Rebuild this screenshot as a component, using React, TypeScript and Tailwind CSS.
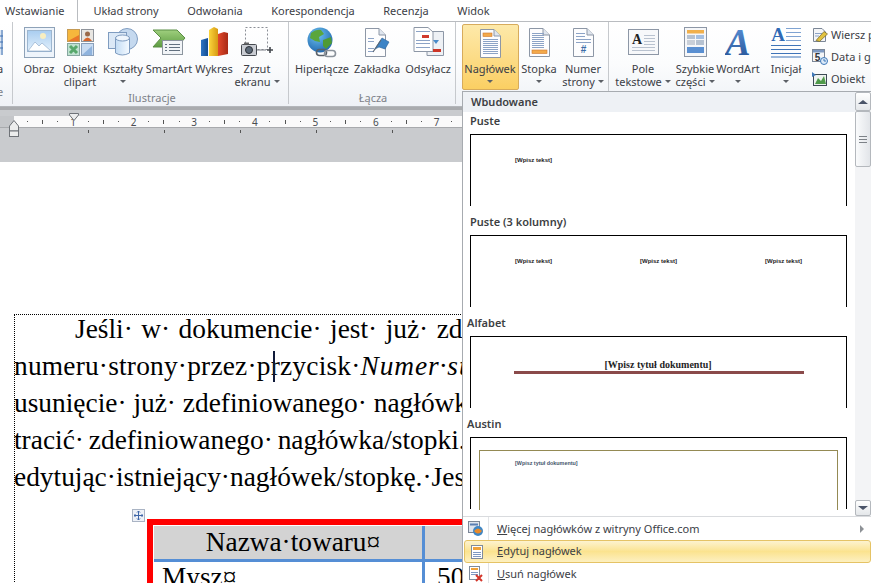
import React from "react";

const Arrow = () => (
  <span className="inline-block w-0 h-0 border-l-[3px] border-r-[3px] border-t-[3px] border-l-transparent border-r-transparent border-t-[#5c6066]" />
);

const Doc = ({ children, x = 0 }: { children?: React.ReactNode; x?: number }) => (
  <>
    <path d={`M${x + 1.5} 1.5H${x + 15}L${x + 21.5} 8V29.5H${x + 1.5}Z`} fill="#fdfdfe" stroke="#8d97a6" />
    <path d={`M${x + 15} 1.5V8H${x + 21.5}`} fill="#dfe5ee" stroke="#8d97a6" />
    {children}
  </>
);

const Lines = ({ ys, x1 = 4, x2 = 19 }: { ys: number[]; x1?: number; x2?: number }) => (
  <>
    {ys.map((y) => (
      <path key={y} d={`M${x1} ${y + 0.5}H${x2}`} stroke="#8ca3c6" />
    ))}
  </>
);

const Icons: Record<string, React.ReactNode> = {
  obraz: (
    <svg width="31" height="31" viewBox="0 0 31 31">
      <defs>
        <linearGradient id="sky" x1="0" y1="0" x2="0" y2="1">
          <stop offset="0" stopColor="#a9cdf0" />
          <stop offset="1" stopColor="#e4f1fc" />
        </linearGradient>
      </defs>
      <rect x="0.5" y="0.5" width="30" height="30" fill="#eef4fb" stroke="#8ea2b8" />
      <rect x="3.5" y="3.5" width="24" height="21" fill="url(#sky)" stroke="#9db6cf" />
      <circle cx="19" cy="9" r="3" fill="#f8eec0" />
      <path d="M4 24 L11 15 L15 19 L18 16 L27 24Z" fill="#fff" stroke="#86a5c6" strokeWidth="0.6" />
    </svg>
  ),
  clipart: (
    <svg width="27" height="27" viewBox="0 0 27 27">
      <rect x="0.5" y="0.5" width="12" height="12" fill="#f6b73c" stroke="#c49a55" />
      <path d="M1 12 L12 6V12Z" fill="#e9772a" />
      <rect x="14.5" y="0.5" width="12" height="12" fill="#e8e6e2" stroke="#8f949b" />
      <circle cx="20.5" cy="5" r="2.5" fill="#9a6a4a" />
      <path d="M16 12 Q20.5 5 25 12Z" fill="#d7662c" />
      <rect x="0.5" y="14.5" width="12" height="12" fill="#bfe1d0" stroke="#86a7a0" />
      <path d="M3 17 L10 24 M10 17 L3 24" stroke="#57a86b" strokeWidth="3" />
      <rect x="14.5" y="14.5" width="12" height="12" fill="#c9dcf2" stroke="#8aa0bb" />
      <path d="M15 26 L25 17V26Z" fill="#8fb3dd" />
    </svg>
  ),
  shapes: (
    <svg width="30" height="29" viewBox="0 0 30 29">
      <defs>
        <linearGradient id="cyl" x1="0" y1="0" x2="1" y2="0">
          <stop offset="0" stopColor="#c3dcf4" />
          <stop offset="1" stopColor="#f5faff" />
        </linearGradient>
      </defs>
      <circle cx="19" cy="11" r="10.5" fill="#c5d9ef" stroke="#7f9cc0" />
      <rect x="0.5" y="4.5" width="18" height="16" fill="#dbe8f6" stroke="#7f9cc0" />
      <path d="M7.5 10 V25 Q14 29 21.5 25 V10Z" fill="url(#cyl)" stroke="#7f9cc0" />
      <ellipse cx="14.5" cy="10" rx="7" ry="3" fill="#eff6fd" stroke="#7f9cc0" />
    </svg>
  ),
  smartart: (
    <svg width="34" height="27" viewBox="0 0 34 27">
      <defs>
        <linearGradient id="sa" x1="0" y1="0" x2="0" y2="1">
          <stop offset="0" stopColor="#9fcf7e" />
          <stop offset="1" stopColor="#5d9c41" />
        </linearGradient>
      </defs>
      <path d="M1 1 H25 L33 9 L25 18 H1 L9 9Z" fill="url(#sa)" stroke="#5b8e45" />
      <rect x="10.5" y="11.5" width="20" height="14" fill="#f1f4f7" stroke="#8c959e" />
      <path d="M13 15.5h2M17 15.5h11M13 18.5h2M17 18.5h11M13 21.5h2M17 21.5h11" stroke="#62707f" />
    </svg>
  ),
  chart: (
    <svg width="28" height="30" viewBox="0 0 28 30">
      <defs>
        <linearGradient id="b1" x1="0" y1="0" x2="1" y2="0">
          <stop offset="0" stopColor="#2d74c4" />
          <stop offset="1" stopColor="#134d92" />
        </linearGradient>
        <linearGradient id="b2" x1="0" y1="0" x2="1" y2="0">
          <stop offset="0" stopColor="#fbd53c" />
          <stop offset="1" stopColor="#d79a14" />
        </linearGradient>
        <linearGradient id="b3" x1="0" y1="0" x2="1" y2="0">
          <stop offset="0" stopColor="#e2492b" />
          <stop offset="1" stopColor="#a82a16" />
        </linearGradient>
      </defs>
      <path d="M1 13 L8 11 V29 H1Z" fill="url(#b1)" />
      <path d="M9 3 L14 0 L18 2 V29 H9Z" fill="url(#b2)" />
      <path d="M18 7 L24 5 L28 6 V27 L18 29Z" fill="url(#b3)" />
    </svg>
  ),
  screen: (
    <svg width="33" height="30" viewBox="0 0 33 30">
      <rect x="4.5" y="0.5" width="22" height="22" fill="none" stroke="#8b8f96" strokeDasharray="2 2" />
      <rect x="0.5" y="17.5" width="15" height="11" rx="1" fill="#c9ccd2" stroke="#45494f" />
      <rect x="3" y="15.5" width="5" height="2" fill="#666" />
      <circle cx="8" cy="23" r="3.5" fill="#5d6a78" stroke="#2c3138" />
      <path d="M16 23h9" stroke="#7a7f86" />
      <path d="M26 23h6M29 20v6" stroke="#44484e" strokeWidth="1.6" />
    </svg>
  ),
  globe: (
    <svg width="30" height="31" viewBox="0 0 30 31">
      <defs>
        <radialGradient id="gl" cx="0.4" cy="0.3" r="0.8">
          <stop offset="0" stopColor="#6cc1f0" />
          <stop offset="1" stopColor="#1a5fa8" />
        </radialGradient>
      </defs>
      <circle cx="13" cy="13" r="12.5" fill="url(#gl)" />
      <path d="M4 6 Q9 2 14 3 L17 7 L12 10 L13 15 L8 14 L3 11Z" fill="#5aa63c" />
      <path d="M16 13 L24 10 L25 16 L19 22 L16 19Z" fill="#4f9a33" />
      <rect x="9.5" y="22.5" width="10" height="6" rx="3" fill="none" stroke="#59616a" strokeWidth="1.6" />
      <rect x="17.5" y="23.5" width="11" height="6" rx="3" fill="none" stroke="#8a929b" strokeWidth="1.6" />
    </svg>
  ),
  bookmark: (
    <svg width="26" height="31" viewBox="0 0 26 31">
      <Doc>
        <Lines ys={[11, 14, 21, 24]} x2={10} />
      </Doc>
      <path d="M11 22 L18 11 L25 15 L21 22 L15 20Z" fill="#3d84c6" stroke="#2a5f96" strokeWidth="0.6" />
      <path d="M9 25 L17 13" stroke="#5a6878" strokeWidth="1.2" />
    </svg>
  ),
  crossref: (
    <svg width="31" height="30" viewBox="0 0 31 30">
      <path d="M14 4.5H30.5V28.5H14Z" fill="#eef1f5" stroke="#8d97a6" />
      <path d="M1 0.5H15L20 5V24.5H1Z" fill="#fff" stroke="#8d97a6" />
      <Lines ys={[4, 13, 16, 20]} x1={3} x2={17} />
      <rect x="9" y="8" width="7" height="3" fill="#d03a2d" />
      <path d="M20 13 h6 l-3 4Z" fill="#4a8ac8" />
      <rect x="20" y="22" width="8" height="3" fill="#cc3527" />
    </svg>
  ),
  header: (
    <svg width="23" height="30" viewBox="0 0 23 30">
      <Doc>
        <rect x="4" y="5" width="9" height="3.5" fill="#f3a94a" stroke="#d1782c" strokeWidth="0.6" />
        <Lines ys={[11, 13, 15, 17, 19, 21, 23, 25]} />
      </Doc>
    </svg>
  ),
  footer: (
    <svg width="23" height="30" viewBox="0 0 23 30">
      <Doc>
        <Lines ys={[6, 8, 10, 12, 14, 16, 18, 20]} x2={16} />
        <rect x="4" y="23" width="15" height="3.5" fill="#f3a94a" stroke="#d1782c" strokeWidth="0.6" />
      </Doc>
    </svg>
  ),
  number: (
    <svg width="23" height="30" viewBox="0 0 23 30">
      <Doc>
        <Lines ys={[6, 9]} x2={13} />
        <Lines ys={[12, 15]} />
        <text x="11.5" y="26" textAnchor="middle" fontFamily="Liberation Sans, sans-serif" fontWeight="700" fontSize="10" fill="#3d6da8">#</text>
      </Doc>
    </svg>
  ),
  textbox: (
    <svg width="31" height="26" viewBox="0 0 31 26">
      <rect x="0.5" y="0.5" width="30" height="25" fill="#f7f8fa" stroke="#8d97a6" />
      <text x="9" y="15" textAnchor="middle" fontFamily="Liberation Serif, serif" fontWeight="700" fontSize="14" fill="#222">A</text>
      <path d="M16 6.5h11M16 9.5h11M16 12.5h11M16 15.5h11M4 18.5h23M4 21.5h23" stroke="#b9c2cf" />
    </svg>
  ),
  parts: (
    <svg width="23" height="30" viewBox="0 0 23 30">
      <rect x="0.5" y="0.5" width="22" height="29" fill="#f6f7f9" stroke="#8d97a6" />
      <rect x="3" y="3" width="17" height="3.5" fill="#f1b04c" />
      <rect x="3" y="8" width="8" height="4" fill="#b6c2d1" />
      <rect x="12" y="8" width="8" height="4" fill="#a5c0e2" />
      <rect x="3" y="13" width="8" height="5" fill="#c9cfd8" />
      <rect x="12" y="13" width="8" height="5" fill="#b6c2d1" />
      <rect x="3" y="20" width="17" height="6" fill="#5a8fd1" />
    </svg>
  ),
  wordart: (
    <svg width="26" height="30" viewBox="0 0 26 30">
      <defs>
        <linearGradient id="wa" x1="0" y1="0" x2="0" y2="1">
          <stop offset="0" stopColor="#5f97dd" />
          <stop offset="1" stopColor="#214f92" />
        </linearGradient>
      </defs>
      <text x="13" y="28" textAnchor="middle" fontFamily="Liberation Serif, serif" fontWeight="700" fontStyle="italic" fontSize="38" fill="url(#wa)">A</text>
    </svg>
  ),
  dropcap: (
    <svg width="31" height="31" viewBox="0 0 31 31">
      <text x="7" y="14" textAnchor="middle" fontFamily="Liberation Serif, serif" fontWeight="700" fontSize="19" fill="#2f6ab5">A</text>
      <path d="M15 1.5h15M15 5.5h15M15 9.5h15M15 13.5h15" stroke="#7fa3d2" />
      <path d="M0 18.5h30M0 22.5h30M0 26.5h30M0 30h30" stroke="#3f74b8" />
    </svg>
  ),
};

const SmallIcons: React.ReactNode[] = [
  <svg key="a" width="16" height="16" viewBox="0 0 16 16">
    <path d="M1.5 1.5H10L13.5 5V14.5H1.5Z" fill="#f4f5f7" stroke="#7b8696" />
    <path d="M3 6.5h7M3 9h4" stroke="#8ca3c6" />
    <path d="M4 13.5L12 4.5L15.5 7L7.5 14.5Z" fill="#e2c23f" stroke="#6d6128" strokeWidth="0.7" />
  </svg>,
  <svg key="b" width="16" height="16" viewBox="0 0 16 16">
    <rect x="0.5" y="0.5" width="12" height="12" fill="#f4f5f7" stroke="#7b8696" />
    <rect x="1" y="1" width="11" height="2.5" fill="#7d99c2" />
    <text x="5.5" y="12" textAnchor="middle" fontFamily="Liberation Sans, sans-serif" fontWeight="700" fontSize="10" fill="#33363b">5</text>
    <circle cx="12" cy="12" r="3.5" fill="#dbe9f8" stroke="#3f78b8" />
    <path d="M12 10v2h2" stroke="#3f78b8" fill="none" />
  </svg>,
  <svg key="c" width="16" height="16" viewBox="0 0 16 16">
    <rect x="1.5" y="3.5" width="13" height="11" fill="#eef2f0" stroke="#3d4a55" />
    <path d="M3 13 L6 7 L9 10 L12 5 L14 13Z" fill="#4f9a4a" />
    <path d="M0 1 L4 4 L0 6Z" fill="#3f78b8" />
  </svg>,
];

const Big = ({ icon, lines, w, arrow, active, className }: { icon: string; lines: string[]; w: string; arrow?: boolean; active?: boolean; className?: string }) => (
  <div
    className={`flex flex-col items-center shrink-0 ${w} ${className ?? ""} ${
      active ? "bg-gradient-to-b from-[#fde9a9] to-[#fbcf62] border border-[#d7ab5c] rounded-[2px] mt-[2px] h-[66px] pr-px" : "h-[67px]"
    }`}
  >
    <div className={`flex items-center justify-center ${active ? "h-[35px]" : "h-[38px] pt-[2px]"}`}>{Icons[icon]}</div>
    <div className="text-[11px] leading-[13px] mt-[2px] whitespace-nowrap text-center text-[#3c4046]">{lines[0]}</div>
    <div className="text-[11px] leading-[13px] whitespace-nowrap text-center text-[#3c4046] flex items-center justify-center gap-[3px] h-[13px]">
      {lines[1]}
      {arrow && <Arrow />}
    </div>
  </div>
);

const Group = ({ label, children, className }: { label: string; children: React.ReactNode; className: string }) => (
  <div className={`flex flex-col shrink-0 border-r border-[#c6c9cd] h-[82px] ${className}`}>
    <div className="flex h-[68px]">{children}</div>
    <div className="text-[11px] leading-[13px] text-center text-[#7d8188] mt-[2px] pr-[3px]">{label}</div>
  </div>
);

const Ruler = () => {
  const items = ["1", "2", "3", "4", "5", "6", "7", "8"];
  return (
    <div className="flex h-[12px] flex-1 pl-[6px] bg-[#fafafa] border-b border-[#a8aaad] overflow-hidden">
      {items.map((n) => (
        <div key={n} className="flex shrink-0 w-[60.6px]">
          {["dot", "bar", "dot"].map((k, i) => (
            <span key={i} className="w-[15.15px] flex items-center justify-center">
              <span className={k === "dot" ? "w-px h-px bg-[#555]" : "w-px h-[4px] bg-[#555]"} />
            </span>
          ))}
          <span className="w-[15.15px] text-center text-[10px] leading-[13px] text-[#4a4d52]">{n}</span>
        </div>
      ))}
    </div>
  );
};

const Cover = ({ label, labelClass, children }: { label: string; labelClass: string; children: React.ReactNode }) => (
  <div className="h-[101px] shrink-0">
    <div className={`text-[11px] font-semibold leading-[14px] text-[#3d3f43] h-[16px] pt-[2px] ${labelClass}`}>{label}</div>
    <div className="ml-[7px] mt-[6px] w-[377px] h-[72px] border-t border-l border-r border-black flex items-start">{children}</div>
  </div>
);

const Tiny = ({ className = "" }: { className?: string }) => (
  <span className={`font-['Liberation_Sans',sans-serif] text-[6px] font-bold leading-[8px] text-[#222] whitespace-nowrap ${className}`}>[Wpisz tekst]</span>
);

const Menu = () => (
  <div className="absolute left-[462px] top-[91px] w-[409px] h-[492px] bg-white border-l border-t border-[#a7abb0] flex flex-col overflow-hidden">
    <div className="flex h-[424px] shrink-0">
      <div className="flex-1 flex flex-col overflow-hidden">
        <div className="h-[20px] bg-[#eef1f5] text-[11px] font-semibold leading-[20px] pl-[8px] text-[#3d3f43] shrink-0">Wbudowane</div>
        <Cover label="Puste" labelClass="pl-[7px]">
          <Tiny className="ml-[44px] mt-[21px]" />
        </Cover>
        <Cover label="Puste (3 kolumny)" labelClass="pl-[7px]">
          <div className="flex w-full pl-[44px] mt-[21px] gap-[88px]">
            <Tiny />
            <Tiny />
            <Tiny />
          </div>
        </Cover>
        <Cover label="Alfabet" labelClass="pl-[4px]">
          <div className="mx-[43px] mt-[22px] w-[290px] flex-none pr-[2px] border-b-[3px] border-[#8a4a4a] text-center font-['Liberation_Serif',serif] font-bold text-[10px] leading-[12px] text-[#1f1f1f]">
            [Wpisz tytuł dokumentu]
          </div>
        </Cover>
        <Cover label="Austin" labelClass="pl-[4px]">
          <div className="mx-[8px] mt-[12px] flex-1 h-[60px] border-t border-l border-r border-[#948a54] pl-[35px] pt-[8px] font-['Liberation_Sans',sans-serif] text-[5.4px] font-bold leading-[8px] text-[#44546a]">
            [Wpisz tytuł dokumentu]
          </div>
        </Cover>
      </div>
      <div className="w-[16px] shrink-0 bg-[#f3f4f6] flex flex-col">
        <div className="h-[19px] border border-[#b4b8bd] bg-gradient-to-b from-[#fff] to-[#e4e7ea] rounded-[2px] flex items-center justify-center">
          <span className="w-0 h-0 border-l-[5px] border-r-[5px] border-b-[4px] border-l-transparent border-r-transparent border-b-[#4a5468]" />
        </div>
        <div className="h-[56px] border border-[#b4b8bd] bg-gradient-to-r from-[#fafbfc] to-[#e2e5e9] rounded-[2px] flex flex-col items-center justify-center gap-[2px]">
          <span className="w-[8px] h-px bg-[#7d8288]" />
          <span className="w-[8px] h-px bg-[#7d8288]" />
          <span className="w-[8px] h-px bg-[#7d8288]" />
        </div>
        <div className="flex-1" />
        <div className="h-[16px] border border-[#b4b8bd] bg-gradient-to-b from-[#fff] to-[#e4e7ea] rounded-[2px] flex items-center justify-center">
          <span className="w-0 h-0 border-l-[5px] border-r-[5px] border-t-[4px] border-l-transparent border-r-transparent border-t-[#4a5468]" />
        </div>
      </div>
    </div>
    <div className="flex-1 border-t border-[#d9dbde] relative flex flex-col pt-[1px] text-[11px] text-[#3c4046]">
      <div className="absolute left-[25px] top-0 bottom-0 w-px bg-[#e2e4e7]" />
      <div className="h-[22px] flex items-center shrink-0">
        <span className="w-[25px] flex justify-center">
          <svg width="17" height="16" viewBox="0 0 17 16">
            <rect x="1.5" y="0.5" width="11" height="11" fill="#dfe5ee" stroke="#7b8696" />
            <path d="M3 3.5h8" stroke="#5a7fb3" strokeWidth="2" />
            <circle cx="11" cy="10" r="5" fill="#3f86c4" />
            <path d="M7 10 Q11 5 15 10 Q11 15 7 10Z" fill="#e98a2a" />
          </svg>
        </span>
        <span className="ml-[9px] flex-1">
          <span className="underline">W</span>ięcej nagłówków z witryny Office.com
        </span>
        <span className="mr-[7px] w-0 h-0 border-t-[4px] border-b-[4px] border-l-[4px] border-t-transparent border-b-transparent border-l-[#8d9196]" />
      </div>
      <div className="h-[23px] flex items-center shrink-0 ml-[1px] rounded-[3px] border border-[#e5c365] bg-gradient-to-b from-[#fdf3cf] via-[#fbe38f] to-[#fdf0c0] relative">
        <span className="w-[24px] flex justify-center">
          <svg width="12" height="14" viewBox="0 0 12 14">
            <rect x="0.5" y="0.5" width="11" height="13" fill="#fff" stroke="#7f8b9c" />
            <rect x="2" y="2" width="8" height="3" fill="#f0a23a" />
            <path d="M2 7.5h8M2 9.5h8M2 11.5h8" stroke="#7d99c2" />
          </svg>
        </span>
        <span className="ml-[8px]">
          <span className="underline">E</span>dytuj nagłówek
        </span>
      </div>
      <div className="h-[22px] flex items-center shrink-0">
        <span className="w-[25px] flex justify-center">
          <svg width="14" height="16" viewBox="0 0 14 16">
            <rect x="0.5" y="0.5" width="10" height="13" fill="#fff" stroke="#7f8b9c" />
            <rect x="2" y="2" width="7" height="2" fill="#f0a23a" />
            <path d="M2 6.5h7M2 8.5h7" stroke="#7d99c2" />
            <path d="M7 9l6 6M13 9l-6 6" stroke="#d4362a" strokeWidth="2" />
          </svg>
        </span>
        <span className="ml-[9px]">
          <span className="underline">U</span>suń nagłówek
        </span>
      </div>
    </div>
  </div>
);

export default function App() {
  return (
    <div className="relative w-[871px] h-[583px] overflow-hidden bg-white font-['Noto_Sans',sans-serif]">
      {/* tabs */}
      <div className="flex h-[22px] text-[11px] leading-[21px] text-[#3c4046]">
        <div className="pl-[5px] pr-[12px] border-r border-[#b9bcc0] tracking-[0.05px]">Wstawianie</div>
        <div className="flex-1 flex gap-[28.5px] pl-[16px] border-b border-[#b9bcc0]">
          <span>Układ strony</span>
          <span>Odwołania</span>
          <span>Korespondencja</span>
          <span>Recenzja</span>
          <span>Widok</span>
        </div>
      </div>
      {/* ribbon */}
      <div className="flex h-[85px] bg-gradient-to-b from-white via-[#fbfcfd] to-[#eff2f6] border-b border-[#b3b6ba]">
        <div className="w-[13px] shrink-0 border-r border-[#c6c9cd] h-[82px] flex flex-col overflow-hidden text-[11px] text-[#3c4046]">
          <svg width="3" height="25" viewBox="0 0 3 25" className="mt-[8px] shrink-0">
            <path d="M0 0h3v25H0z" fill="#dbe6f3" />
            <path d="M0 6h3M0 12h3M0 18h3M2 0v25" stroke="#3c6fb0" />
          </svg>
          <div className="-ml-[3px] leading-[13px] mt-[7px]">a</div>
          <div className="-ml-[3px] leading-[13px] mt-[10px] text-[#7d8188]">e</div>
        </div>
        <Group label="Ilustracje" className="w-[276px] pl-[6px]">
          <Big icon="obraz" lines={["Obraz", ""]} w="w-[40px]" />
          <Big icon="clipart" lines={["Obiekt", "clipart"]} w="w-[42px]" />
          <Big icon="shapes" lines={["Kształty", ""]} w="w-[44px]" arrow />
          <Big icon="smartart" lines={["SmartArt", ""]} w="w-[48px]" />
          <Big icon="chart" lines={["Wykres", ""]} w="w-[42px]" />
          <Big icon="screen" lines={["Zrzut", "ekranu"]} w="w-[44px]" arrow />
        </Group>
        <Group label="Łącza" className="w-[167px] pl-[5px]">
          <Big icon="globe" lines={["Hiperłącze", ""]} w="w-[56px]" />
          <Big icon="bookmark" lines={["Zakładka", ""]} w="w-[54px]" />
          <Big icon="crossref" lines={["Odsyłacz", ""]} w="w-[48px]" />
        </Group>
        <div className="flex shrink-0 w-[153px] pl-[6px] border-r border-[#c6c9cd] h-[82px]">
          <Big icon="header" lines={["Nagłówek", ""]} w="w-[57px]" arrow active />
          <Big icon="footer" lines={["Stopka", ""]} w="w-[40px]" arrow />
          <Big icon="number" lines={["Numer", "strony"]} w="w-[48px]" arrow />
        </div>
        <div className="flex pl-[6px]">
          <Big icon="textbox" lines={["Pole", "tekstowe"]} w="w-[56px]" arrow />
          <Big icon="parts" lines={["Szybkie", "części"]} w="w-[48px]" arrow />
          <Big icon="wordart" lines={["WordArt", ""]} w="w-[38px]" arrow />
          <Big icon="dropcap" lines={["Inicjał", ""]} w="w-[46px]" arrow className="ml-[6px]" />
          <div className="ml-[3px] flex flex-col pt-[3px] gap-[2px] text-[11px] text-[#3c4046] whitespace-nowrap">
            {["Wiersz podpisu", "Data i godzina", "Obiekt"].map((t, i) => (
              <div key={t} className="flex items-center h-[20px] gap-[3px]">
                {SmallIcons[i]}
                {t}
              </div>
            ))}
          </div>
        </div>
      </div>
      {/* ruler band */}
      <div className="relative h-[55px] bg-[#c9cbce] border-t-[3px] border-[#a9abae] pt-[6px] flex flex-col">
        <div className="flex h-[12px]">
          <div className="w-[14px] bg-[#c4c6c9] border-b border-[#a8aaad] shrink-0" />
          <Ruler />
        </div>
        <div className="flex ml-[88px] gap-[75px] mt-[2px]">
          {[0, 1, 2, 3, 4].map((i) => (
            <span key={i} className="w-px h-[3px] bg-[#555]" />
          ))}
        </div>
        <svg width="10" height="9" viewBox="0 0 10 9" className="absolute left-[69px] top-[3px]">
          <path d="M0.5 0.5H9.5V2L5 7.5L0.5 2Z" fill="#eceded" stroke="#6f7378" />
        </svg>
        <svg width="10" height="17" viewBox="0 0 10 17" className="absolute left-[9px] top-[10px]">
          <path d="M0.5 6L5 0.5L9.5 6V11H0.5Z" fill="#eceded" stroke="#6f7378" />
          <rect x="0.5" y="11" width="9" height="5.5" fill="#eceded" stroke="#6f7378" />
        </svg>
      </div>
      {/* document */}
      <div className="ml-[14px] mt-[152px] h-[270px] border-l border-t border-dotted border-black font-['Liberation_Serif',serif] text-[27.4px] text-black whitespace-nowrap relative">
        <div className="h-[37px] leading-[29px] pl-[60px] [word-spacing:1.6px]">Jeśli· w· dokumencie· jest· już· zdefiniowany</div>
        <div className="h-[37px] leading-[29px] relative -ml-px tracking-[0.2px]">
          numeru·strony·przez·przycisk·<i className="tracking-[0.9px]">Numer·strony</i>
          <span className="absolute left-[259px] -top-px w-[2px] h-[31px] bg-[#101a3a]" />
        </div>
        <div className="h-[37px] leading-[29px] -ml-px">usunięcie· już· zdefiniowanego· nagłówka</div>
        <div className="h-[37px] leading-[29px] -ml-px [word-spacing:-2px]">tracić· zdefiniowanego· nagłówka/stopki.</div>
        <div className="h-[37px] leading-[29px] -ml-px">edytując·istniejący·nagłówek/stopkę.·Jest</div>
        <div className="ml-[132px] mt-[19px] border-[6px] border-[#ff0000] p-px w-[600px] flex flex-col text-[27.3px]">
          <div className="flex h-[33px] bg-[#d3d3d3] border-b-[3px] border-[#558ed5] box-content">
            <div className="w-[258px] pl-[10px] text-center leading-[33px] border-r-[3px] border-[#558ed5] box-content">Nazwa·towaru¤</div>
            <div className="flex-1" />
          </div>
          <div className="flex h-[33px]">
            <div className="w-[260px] pl-[8px] leading-[30px] border-r-[3px] border-[#558ed5] box-content">Mysz¤</div>
            <div className="pl-[12px] leading-[30px]">50</div>
          </div>
        </div>
        <div className="absolute left-[117px] top-[194px] w-[13px] h-[13px] bg-[#eef1f7] border border-[#aab4c4] flex items-center justify-center">
          <svg width="9" height="9" viewBox="0 0 9 9">
            <path d="M4.5 0v9M0 4.5h9M3 1.5L4.5 0L6 1.5M3 7.5L4.5 9L6 7.5M1.5 3L0 4.5L1.5 6M7.5 3L9 4.5L7.5 6" stroke="#3f66a8" fill="none" />
          </svg>
        </div>
      </div>
      <Menu />
    </div>
  );
}
